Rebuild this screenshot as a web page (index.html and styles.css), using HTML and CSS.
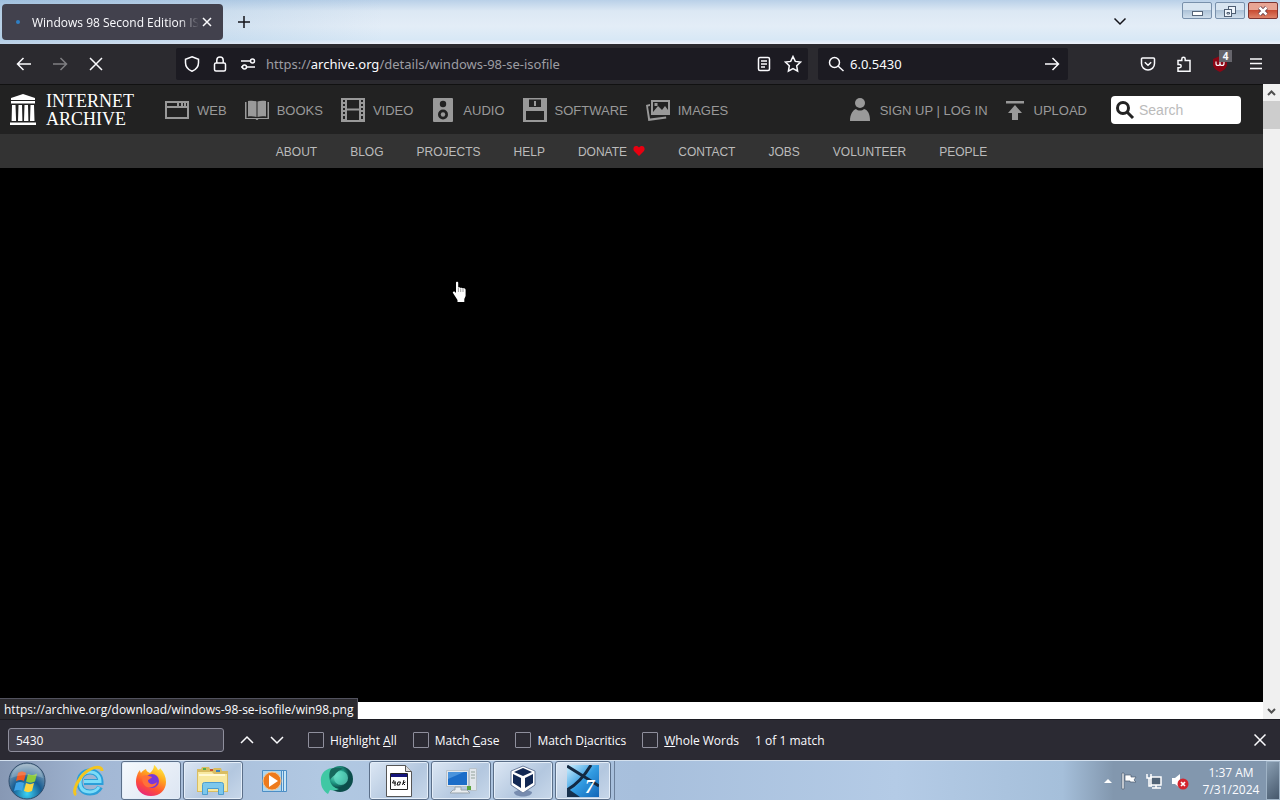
FILE: index.html
```
<!DOCTYPE html>
<html lang="en">
<head>
    <meta charset="UTF-8">
    <meta name="viewport" content="width=device-width, initial-scale=1.0">
    <title>Windows 98 Second Edition ISO</title>
    <link rel="stylesheet" href="styles.css">
</head>
<body>
    <!-- Tab strip -->
    <div class="titlebar">
        <div class="tab">
            <span class="tab-spinner"></span>
            <span class="tab-title">Windows 98 Second Edition ISO</span>
            <button class="tab-close" aria-label="Close tab"><svg width="10" height="10" viewBox="0 0 10 10"><path d="M1 1l8 8M9 1L1 9"/></svg></button>
        </div>
        <button class="new-tab" aria-label="New tab"><svg width="14" height="14" viewBox="0 0 14 14"><path d="M7 1v12M1 7h12"/></svg></button>
        <button class="list-tabs" aria-label="List all tabs"><svg width="14" height="14" viewBox="0 0 14 14"><path d="M1.500 4.500L7 10l5.500-5.500"/></svg></button>
        <div class="window-controls">
            <button aria-label="Minimize"><svg width="28" height="16" viewBox="0 0 28 16"><rect x="9.500" y="8.500" width="10" height="4" fill="#fff" stroke="#566579"/></svg></button>
            <button aria-label="Restore"><svg width="28" height="16" viewBox="0 0 28 16"><g fill="#eef5fc" stroke="#4e5e73"><rect x="12.500" y="3.500" width="7" height="7"/><rect x="8.500" y="6.500" width="7" height="7"/><path d="M11 9.500h2.500v1.500H11z"/></g></svg></button>
            <button class="close" aria-label="Close"><svg width="28" height="16" viewBox="0 0 28 16"><path d="M10.500 4.500l7 7M17.500 4.500l-7 7" stroke="#5b3540" stroke-width="4"/><path d="M10.500 4.500l7 7M17.500 4.500l-7 7" stroke="#fff" stroke-width="2.500"/></svg></button>
        </div>
    </div>

    <!-- Navigation toolbar -->
    <div class="toolbar">
        <button class="tool" aria-label="Back"><svg width="16" height="16" viewBox="0 0 16 16"><path d="M15 8H1.500M7.500 2l-6 6 6 6"/></svg></button>
        <button class="tool disabled" aria-label="Forward"><svg width="16" height="16" viewBox="0 0 16 16"><path d="M1 8h13.500M8.500 2l6 6-6 6"/></svg></button>
        <button class="tool" aria-label="Stop"><svg width="16" height="16" viewBox="0 0 16 16"><path d="M2 2l12 12M14 2L2 14"/></svg></button>
        <div class="urlbar">
            <svg width="16" height="16" viewBox="0 0 16 16"><path d="M8 .8l6.500 2.400v3.600c0 4-2.600 6.900-6.500 8.500-3.900-1.600-6.500-4.500-6.500-8.500V3.200z"/></svg>
            <svg width="16" height="16" viewBox="0 0 16 16"><rect x="2.500" y="7" width="11" height="8" rx="1.500"/><path d="M4.800 7V4.200a3.200 3.200 0 0 1 6.400 0V7"/></svg>
            <svg width="16" height="16" viewBox="0 0 16 16"><path d="M1 5h9M7 11h8M1 11h1"/><circle cx="12.500" cy="5" r="2"/><circle cx="4.500" cy="11" r="2"/></svg>
            <div class="url">https://<b>archive.org</b>/details/windows-98-se-isofile</div>
            <svg width="16" height="16" viewBox="0 0 16 16"><rect x="2.500" y="1.500" width="11" height="13" rx="1.500"/><path d="M5 5h6M5 8h6M5 11h4"/></svg>
            <svg width="18" height="18" viewBox="0 0 18 18"><path d="M9 1.500l2.300 4.900 5.200.7-3.800 3.700.9 5.300L9 13.500l-4.600 2.600.9-5.300L1.500 7.100l5.200-.7z"/></svg>
        </div>
        <div class="searchbar">
            <svg width="16" height="16" viewBox="0 0 16 16"><circle cx="6.500" cy="6.500" r="5"/><path d="M10 10l5.500 5"/></svg>
            <input type="text" value="6.0.5430" aria-label="Search the web">
            <button aria-label="Go"><svg width="16" height="16" viewBox="0 0 16 16"><path d="M1 8h13.500M8.500 2l6 6-6 6"/></svg></button>
        </div>
        <button class="tool" aria-label="Save to Pocket"><svg width="16" height="16" viewBox="0 0 16 16"><path d="M2.500 2h11a1 1 0 0 1 1 1v4.500a6.500 6.500 0 0 1-13 0V3a1 1 0 0 1 1-1zM4.800 6.200L8 9.300l3.200-3.100"/></svg></button>
        <button class="tool" aria-label="Extensions"><svg width="16" height="16" viewBox="0 0 16 16"><path d="M2 4.500h3.800V3a1.700 1.700 0 0 1 3.400 0v1.500H14v10.700H2v-3.400h1.500a1.700 1.700 0 0 0 0-3.400H2z"/></svg></button>
        <button class="tool blocker" aria-label="Content blocker"><svg width="16" height="16" viewBox="0 0 16 16"><path d="M8 0l7 3v5c0 4-3 6-7 8-4-2-7-4-7-8V3z" fill="#8c0514" stroke="none"/><path d="M4 5.500v2a2 2 0 0 0 4 0v-2M8 7.500a2 2 0 0 0 4 0v-2H9.500" stroke-width="1.200"/></svg><span class="count">4</span></button>
        <button class="tool" aria-label="Menu"><svg width="16" height="16" viewBox="0 0 16 16"><path d="M2 3h12M2 7.500h12M2 12.500h12"/></svg></button>
    </div>

    <div class="viewport">
        <div class="page">
            <header class="topnav">
                <a class="brand" href="#">
                    <svg width="28" height="32" viewBox="0 0 28 32" fill="#fff"><path d="M14 0l12 4v2H2V4zM2 7h24v2.500H2zM3 11h3.500l.6 16H2.600zM9.500 11H13l.4 16H9zM15.500 11H19l.4 16H15zM21.500 11H25l.5 16H21zM1 28.500h26V31H1z"/></svg>
                    <span>INTERNET<br>ARCHIVE</span>
                </a>
                <nav class="media">
                    <a href="#"><svg width="24" height="26" viewBox="0 0 24 26"><path fill-rule="evenodd" d="M0 4h24v18H0zM2 6v3h10V6zM14 6v3h2V6zM18 6v3h1V6zM21 6v3h1V6zM2 11v9h20v-9z"/></svg>WEB</a>
                    <a href="#"><svg width="24" height="26" viewBox="0 0 24 26"><path d="M3 4c3-.5 6-.5 8.500.5V20c-3-1-6-1-8.500-.5zM12.500 4.500C15 3.500 18 3.500 21 4v15.500c-2.500-.5-5.500-.5-8.500.5zM0 5h1.500v16h21V5H24v17H13.500l-1 1h-1l-1-1H0z"/></svg>BOOKS</a>
                    <a href="#"><svg width="24" height="26" viewBox="0 0 24 26"><path fill-rule="evenodd" d="M0 1h24v24H0zM6 3v8.500h12V3zM6 13.500V23h12v-9.500zM2 3v2h2V3zM2 7v2h2V7zM2 11v2h2v-2zM2 15v2h2v-2zM2 19v3h2v-3zM20 3v2h2V3zM20 7v2h2V7zM20 11v2h2v-2zM20 15v2h2v-2zM20 19v3h2v-3z"/></svg>VIDEO</a>
                    <a href="#"><svg width="24" height="26" viewBox="0 0 24 26"><rect x="2" y="1" width="20" height="24" rx="1"/><circle cx="12" cy="7" r="3.200" fill="#222"/><circle cx="12" cy="17.500" r="5" fill="#222"/><circle cx="12" cy="17.500" r="2.200"/></svg>AUDIO</a>
                    <a href="#"><svg width="24" height="26" viewBox="0 0 24 26"><path fill-rule="evenodd" d="M0 1h24v24H0zM6 2.500V10h12V2.500zM3 14v9h18v-9z"/><path d="M11 4h2v5h-2z"/></svg>SOFTWARE</a>
                    <a href="#"><svg width="24" height="26" viewBox="0 0 24 26"><path fill-rule="evenodd" d="M5 3h19v15H5zM7 5v11h15V5z"/><path d="M7 15l5-6 4 4 3-4 3 4v3H7zM8.500 6h3v3h-3zM0 8l4-1v2l-2 .5 2 12 16-2 .3 2L2.300 24z"/></svg>IMAGES</a>
                </nav>
                <nav class="account">
                    <a href="#"><svg width="24" height="26" viewBox="0 0 24 26"><circle cx="12" cy="6" r="5"/><path d="M2 24c0-7 3-11 6-12 2 2 6 2 8 0 4 1 6 5 6 12z"/></svg>SIGN UP | LOG IN</a>
                    <a href="#"><svg width="24" height="26" viewBox="0 0 24 26"><path d="M4 4h18v2.500H4zM13 8l7 8h-4v7h-6v-7H6z"/></svg>UPLOAD</a>
                </nav>
                <label class="ia-search">
                    <svg width="20" height="20" viewBox="0 0 20 20"><circle cx="8" cy="8" r="5.500"/><path d="M12 12l6 6"/></svg>
                    <input type="text" placeholder="Search" aria-label="Search the archive">
                </label>
            </header>
            <nav class="subnav">
                <a href="#">ABOUT</a>
                <a href="#">BLOG</a>
                <a href="#">PROJECTS</a>
                <a href="#">HELP</a>
                <a href="#">DONATE <svg width="12" height="10" viewBox="0 0 12 10"><path fill="#e80010" d="M6 10L1 5C-.5 2.500 1 0 3 0c1.500 0 2.500.6 3 1.500C6.500.6 7.500 0 9 0c2 0 3.500 2.500 2 5z"/></svg></a>
                <a href="#">CONTACT</a>
                <a href="#">JOBS</a>
                <a href="#">VOLUNTEER</a>
                <a href="#">PEOPLE</a>
            </nav>
            <div class="theatre"></div>
            <div class="page-body"></div>
        </div>
        <div class="scrollbar">
            <button aria-label="Scroll up"><svg width="9" height="6" viewBox="0 0 9 6"><path d="M1 5l3.500-3.500L8 5"/></svg></button>
            <span class="thumb"></span>
            <button aria-label="Scroll down"><svg width="9" height="6" viewBox="0 0 9 6"><path d="M1 1l3.500 3.500L8 1"/></svg></button>
        </div>
        <div class="link-status">https://archive.org/download/windows-98-se-isofile/win98.png</div>
        <svg class="pointer" width="16" height="22" viewBox="0 0 16 22"><path fill="#fff" d="M4 1.500C4 .5 6.200.5 6.200 1.500V6.500c.5-.6 2-.5 2.300.5 .5-.6 2-.4 2.300.5 1-.4 2.500.2 2.800 1.200V15l-1.300 3v3H5.500v-2L1 12c-.7-1.200.8-2.200 1.800-1.200L4 12z"/><path stroke="#777" stroke-width=".7" d="M6.400 7v4M8.700 7.500V11M11 8v3"/></svg>
    </div>

    <!-- Find in page -->
    <div class="findbar">
        <input class="find-input" type="text" value="5430" aria-label="Find in page">
        <button class="find-step" aria-label="Previous"><svg width="14" height="14" viewBox="0 0 14 14"><path d="M1 10l6-6 6 6"/></svg></button>
        <button class="find-step" aria-label="Next"><svg width="14" height="14" viewBox="0 0 14 14"><path d="M1 4l6 6 6-6"/></svg></button>
        <div class="find-options">
            <label><input type="checkbox"><span>Highlight <u>A</u>ll</span></label>
            <label><input type="checkbox"><span>Match <u>C</u>ase</span></label>
            <label><input type="checkbox"><span>Match D<u>i</u>acritics</span></label>
            <label><input type="checkbox"><span><u>W</u>hole Words</span></label>
            <span>1 of 1 match</span>
        </div>
        <button class="find-close" aria-label="Close find bar"><svg width="12" height="12" viewBox="0 0 12 12"><path d="M.5.500l11 11M11.500.500l-11 11"/></svg></button>
    </div>

    <!-- Windows taskbar -->
    <div class="taskbar">
        <button class="start" aria-label="Start">
            <svg width="38" height="38" viewBox="0 0 38 38">
                <defs><radialGradient id="orb" cx=".5" cy=".85" r=".8"><stop offset="0" stop-color="#3bd3f5"/><stop offset=".5" stop-color="#175c92"/><stop offset="1" stop-color="#8fa9bd"/></radialGradient></defs>
                <circle cx="19" cy="19" r="18" fill="url(#orb)" stroke="#304c6b"/>
                <path fill="#ee5a24" d="M10 11c3-2 5-2 8 0l-2 8c-3-1.500-5-1.500-8 0z"/>
                <path fill="#8ecb3c" d="M20 12c3 1.500 5 1.500 9-.5l-2 8c-3 1.500-6 1.500-9 0z"/>
                <path fill="#3fa3e8" d="M8 21c3-1.500 5-1.500 8 0l-2 8c-2-1.500-5-1.500-8 0z"/>
                <path fill="#fcd53f" d="M18 21c3 1.500 5 1.500 8 0l-2 8c-3 1.500-5 1.500-8 0z"/>
                <path fill="#fff" opacity=".2" d="M3 16C5 5 13 2 19 2s14 3 16 14c-10-4-22-4-32 0z"/>
            </svg>
        </button>
        <div class="apps">
            <button class="app" aria-label="Internet Explorer">
                <svg width="34" height="32" viewBox="0 0 34 32"><path fill="none" stroke="#2b9fd9" stroke-width="6" d="M28 22c-2 4-6 5.500-10 5.500C11 27.500 7.500 23 7.500 17S12 6.500 18 6.500 28.500 11 28.500 17H12"/><path fill="none" stroke="#7bdcf8" stroke-width="3" d="M27 22c-2 3-5 5-9 5C11 27 8 23 8 17S12 7 18 7s10 4 10 9.500H12"/><path fill="none" stroke="#f4c51e" stroke-width="3" d="M30 6C30-1 17 2 9 12 3 20 1 28 4 30"/></svg>
            </button>
            <button class="app running active" aria-label="Firefox">
                <svg width="32" height="32" viewBox="0 0 32 32">
                    <defs><linearGradient id="fox" x1=".8" y1="0" x2=".3" y2="1"><stop offset="0" stop-color="#fff04a"/><stop offset=".35" stop-color="#ffab1e"/><stop offset=".7" stop-color="#ff5035"/><stop offset="1" stop-color="#e7277c"/></linearGradient></defs>
                    <path fill="url(#fox)" d="M19 0c3 2 4 5 4 5 2-1 2-1 2-2 4 4 6 9 6 14 0 8-6 14-15 14S1 25 1 17C1 12 3 7 5 5c0 2 1 3 1 3 1-2 3-3 5-4 0 2 2 3 4 4 2-2 4-4 4-8z"/>
                    <circle cx="17" cy="16" r="7" fill="#7a37d8"/>
                    <path fill="#ff7139" d="M8 11c3-2 6 0 9 1-1 2-4 2-4 4 1 4 6 4 9 1-1 6-11 8-14 1-1-3-1-5 0-7z"/>
                </svg>
            </button>
            <button class="app running" aria-label="Explorer">
                <svg width="34" height="32" viewBox="0 0 34 32"><path fill="#d9bd62" d="M1 4h4l1-2h7l1 2h3l1-1h7l1 3h6v21H1z"/><path fill="#f8e9a0" d="M2 7h14l2 2h13v17H2z"/><path fill="#fff9d4" d="M3 9h26v2H3z"/><path fill="#55ae49" d="M7 3h3v2H7z"/><path fill="#c8542f" d="M14 4h3v2h-3z"/><path fill="#3c83bd" d="M20 5h4v2h-4z"/><path fill="#7cc8ec" stroke="#4d9dce" d="M6.500 29.500v-10q0-2 2-2h17q2 0 2 2v10h-5v-6h-11v6z"/></svg>
            </button>
            <button class="app" aria-label="Media Player">
                <svg width="30" height="28" viewBox="0 0 30 28"><path fill="#c9e5f5" stroke="#4c8ec5" d="M9.500 3.500h17v21h-17zM6.500 3.500h17v21h-17z"/><path fill="#acd5ee" stroke="#4c8ec5" d="M2.500 3.500h19v21h-19z"/><circle cx="12" cy="14" r="9" fill="#ed7a1c" stroke="#f6c38c"/><path fill="#fff" d="M9 8l9 6-9 6z"/></svg>
            </button>
            <button class="app" aria-label="Globe">
                <svg width="34" height="32" viewBox="0 0 34 32"><defs><radialGradient id="globe" cx=".35" cy=".35"><stop offset="0" stop-color="#7ce4cc"/><stop offset=".6" stop-color="#219c86"/><stop offset="1" stop-color="#0c4d4b"/></radialGradient></defs><circle cx="20" cy="14" r="13" fill="url(#globe)"/><path fill="#40c8a4" d="M12 3C4 4 0 10 1 17c0 6 4 10 7 12l2-4c4 1 7 0 9-1-5-1-8-4-9-8-1-5-1-9 2-13z"/><path fill="#17685d" d="M11 4c4-2 9-2 12 0-4 1-6 3-8 6-2 1-4 3-5 5-1-4-1-8 1-11z"/><circle cx="21" cy="13" r="7" fill="#62dcc4" opacity=".7"/></svg>
            </button>
            <button class="app running" aria-label="Batch script">
                <svg width="28" height="32" viewBox="0 0 28 32"><path fill="#fff" stroke="#555" d="M1.500.500h19l6 6v25h-25z"/><path fill="#ddd" stroke="#555" d="M20.500.500v6h6"/><path fill="#fff" stroke="#222" d="M5.500 8.500h17v16h-17z"/><path fill="#15157c" d="M6 9h16v3H6z"/><path fill="none" stroke="#111" d="M9 15l-1.500 3H11m-1-2v5m3-4h2.500l-1 3H12zm6-2l-1.500 5m.5-2l2.500-1m-2.500 1l2 2"/></svg>
            </button>
            <button class="app running" aria-label="Computer">
                <svg width="32" height="30" viewBox="0 0 32 30"><path fill="#e2e7ec" stroke="#b8c2cb" d="M24.500 2.500h7v22h-7zM1.500 4.500h22v16h-22z"/><path fill="#1c6dc8" d="M3 6h19v13H3z"/><path fill="#4a93dc" d="M3 6h16L3 13z"/><path stroke="#93a29a" d="M26 6h4M26 9h4M26 12h4"/><path fill="#e9edf0" stroke="#9aa5ad" d="M10 21h6v3h6l3 3H5l3-3h2z"/><path fill="#5ca63c" d="M22 20h4v4h-4z"/></svg>
            </button>
            <button class="app running" aria-label="VirtualBox">
                <svg width="30" height="32" viewBox="0 0 30 32"><path fill="#778caf" d="M6 27l9-4 9 4c0 6-18 6-18 0z"/><path fill="#fff" stroke="#6b7e9e" d="M15 1l12 5v14l-12 8-12-8V6z"/><path fill="#122853" d="M15 3l9 4-9 4-9-4zM5 9l8 4v10l-8-5zM25 9l-8 4v10l8-5z"/></svg>
            </button>
            <button class="app running grouped" aria-label="Windows 7">
                <svg width="32" height="32" viewBox="0 0 32 32"><defs><linearGradient id="seven" x1="0" y1="0" x2="1" y2="1"><stop offset="0" stop-color="#d1f1ff"/><stop offset=".5" stop-color="#329ce2"/><stop offset="1" stop-color="#1165b7"/></linearGradient></defs><path fill="url(#seven)" d="M0 0h32v32H0z"/><path fill="none" stroke="#132942" stroke-width="3" d="M0 1l32 20M24 0C18 10 11 19 0 25"/><path fill="#17314e" d="M0 23l13 9H0z"/><text x="18" y="28" class="seven">7</text></svg>
            </button>
            <span class="group-edge"></span>
        </div>
        <div class="tray">
            <svg width="10" height="6" viewBox="0 0 10 6"><path fill="#fff" d="M5 1l4 4H1z"/></svg>
            <svg width="16" height="18" viewBox="0 0 16 18"><path fill="#fff" stroke="#4d5d70" stroke-width=".7" d="M1 1h2v16H1zM4 3h6v2h5l-2 3 2 2h-6V9H4z"/></svg>
            <svg width="18" height="18" viewBox="0 0 18 18"><path fill="#516376" stroke="#fff" stroke-width="1.500" d="M6 5h10v8H6z"/><path fill="none" stroke="#fff" stroke-width="1.500" d="M7 16h9M11 13v3M2 2v4h4V2M4 6v8h3"/></svg>
            <svg width="18" height="18" viewBox="0 0 18 18"><path fill="#fff" d="M1 6h3l5-4v14l-5-4H1z"/><circle cx="12" cy="12" r="5.500" fill="#d4242d"/><path stroke="#fff" stroke-width="1.700" d="M10 10l4 4M14 10l-4 4"/></svg>
            <div class="clock">1:37 AM<br>7/31/2024</div>
            <button class="show-desktop" aria-label="Show desktop"></button>
        </div>
    </div>
</body>
</html>
```
FILE: styles.css
```
* {
    box-sizing: border-box;
}

body {
    margin: 0;
    height: 100vh;
    display: flex;
    flex-direction: column;
    overflow: hidden;
    font-family: "Open Sans", "Noto Sans", sans-serif;
    font-size: 12px;
    color: #fbfbfe;
    background: #2b2a33;
}

button {
    display: flex;
    align-items: center;
    justify-content: center;
    padding: 0;
    border: none;
    background: none;
    color: inherit;
    font: inherit;
}

input {
    font: inherit;
    color: inherit;
}

a {
    color: inherit;
    text-decoration: none;
}

svg {
    flex: none;
}

/* Tab strip */
.titlebar {
    height: 44px;
    flex: none;
    display: flex;
    align-items: flex-start;
    padding: 0 2px 0 2px;
    background: linear-gradient(90deg, rgba(120, 165, 205, 0.4), rgba(255, 255, 255, 0) 30%), linear-gradient(#b9d0e8, #dce8f4 25%, #e3edf7 60%, #d8e8f6 90%, #eef1fa);
}

.titlebar svg,
.toolbar svg,
.findbar svg,
.scrollbar svg {
    fill: none;
    stroke: currentColor;
    stroke-width: 1.5;
}

.tab {
    width: 221px;
    height: 36px;
    margin-top: 4px;
    padding: 0 8px 0 10px;
    display: flex;
    align-items: center;
    border-radius: 4px;
    background: #42414d;
}

.tab-spinner {
    width: 4px;
    height: 4px;
    margin: 0 12px 0 4px;
    border-radius: 50%;
    background: #2f7fc4;
}

.tab-title {
    flex: 1;
    min-width: 0;
    overflow: hidden;
    white-space: nowrap;
    -webkit-mask-image: linear-gradient(90deg, #000 88%, transparent);
    mask-image: linear-gradient(90deg, #000 88%, transparent);
}

.tab-close {
    width: 16px;
    height: 20px;
}

.new-tab {
    width: 42px;
    height: 44px;
    color: #15141a;
}

.list-tabs {
    width: 28px;
    height: 42px;
    margin-left: auto;
    margin-right: 48px;
    color: #15141a;
}

.window-controls {
    display: flex;
    gap: 3px;
    padding-top: 2px;
}

.window-controls button {
    width: 30px;
    height: 17px;
    border: 1px solid #7890ab;
    border-radius: 2px;
    background: linear-gradient(#d8e5f1 45%, #aec3d8 50%, #cfdeec);
}

.window-controls svg {
    stroke-width: 1;
}

.window-controls .close {
    border-color: #7d3431;
    background: linear-gradient(#e8a594 45%, #c84c33 50%, #df8268);
}

/* Navigation toolbar */
.toolbar {
    height: 40px;
    flex: none;
    display: flex;
    align-items: center;
    padding: 0 6px;
    background: #2b2a2f;
}

.tool {
    width: 36px;
    height: 32px;
}

.disabled {
    opacity: 0.4;
}

.urlbar,
.searchbar {
    height: 32px;
    display: flex;
    align-items: center;
    background: #1c1b22;
    border-radius: 2px;
}

.urlbar {
    flex: 1;
    min-width: 0;
    gap: 12px;
    margin-left: 62px;
    padding: 0 6px 0 8px;
}

.url {
    flex: 1;
    min-width: 0;
    overflow: hidden;
    white-space: nowrap;
    font-family: "Noto Sans", sans-serif;
    font-size: 13px;
    color: #9d9da3;
    margin-left: -2px;
}

.url b {
    font-weight: normal;
    color: #fbfbfe;
}

.searchbar {
    width: 250px;
    margin: 0 62px 0 10px;
    padding: 0 8px 0 10px;
    gap: 6px;
}

.searchbar input {
    flex: 1;
    min-width: 0;
    padding: 0;
    border: none;
    background: none;
    font-family: "Noto Sans", sans-serif;
    font-size: 13px;
}

.blocker {
    position: relative;
}

.count {
    position: absolute;
    top: 2px;
    right: 6px;
    width: 13px;
    height: 12px;
    font-size: 10px;
    line-height: 12px;
    font-weight: bold;
    background: #66656c;
}

/* Web page area */
.viewport {
    position: relative;
    flex: 1;
    min-height: 0;
    display: flex;
    background: #fff;
}

.page {
    flex: 1;
    min-width: 0;
    display: flex;
    flex-direction: column;
    font-family: "Liberation Sans", Arial, sans-serif;
}

.topnav {
    height: 50px;
    flex: none;
    display: flex;
    align-items: center;
    padding: 1px 22px 0 9px;
    border-top: 1px solid #111;
    background: #222;
    color: #999;
    font-size: 13px;
    white-space: nowrap;
}

.topnav svg {
    fill: #999;
}

.brand {
    width: 156px;
    display: flex;
    align-items: center;
    gap: 9px;
    color: #fff;
    font-family: "Liberation Serif", "Times New Roman", serif;
    font-size: 18px;
    line-height: 18px;
}

.topnav .brand svg {
    fill: #fff;
}

.media,
.account {
    display: flex;
    gap: 18px;
}

.media a,
.account a {
    display: flex;
    align-items: center;
    gap: 8px;
}

.account {
    gap: 14px;
    margin-left: auto;
}

.ia-search {
    width: 130px;
    height: 28px;
    margin-left: 24px;
    padding: 0 4px;
    display: flex;
    align-items: center;
    gap: 4px;
    border-radius: 4px;
    background: #fff;
}

.topnav .ia-search svg {
    fill: none;
    stroke: #222;
    stroke-width: 3;
}

.ia-search input {
    width: 90px;
    padding: 0;
    border: none;
    background: none;
    color: #333;
    font-size: 14px;
}

.ia-search input::placeholder {
    color: #bbb;
}

.subnav {
    height: 34px;
    flex: none;
    display: flex;
    align-items: center;
    justify-content: center;
    gap: 33px;
    padding-top: 1px;
    background: #333;
    color: #bbb;
    font-size: 12px;
}

.subnav svg {
    margin-left: 3px;
}

.theatre {
    flex: 1;
    background: #000;
}

.page-body {
    height: 17px;
    flex: none;
    background: #fff;
}

.scrollbar {
    width: 17px;
    display: flex;
    flex-direction: column;
    background: #f0f0f0;
    color: #505050;
}

.scrollbar button {
    height: 17px;
}

.scrollbar button:last-child {
    margin-top: auto;
}

.scrollbar svg {
    stroke-width: 2;
}

.thumb {
    height: 28px;
    background: #cdcdcd;
}

.link-status {
    position: absolute;
    left: 0;
    bottom: 0;
    height: 21px;
    padding: 0 4px;
    border: 1px solid #52525e;
    border-width: 1px 1px 0 0;
    background: #2b2a2f;
    line-height: 21px;
}

.pointer {
    position: absolute;
    left: 452px;
    top: 197px;
}

/* Find in page */
.findbar {
    height: 41px;
    flex: none;
    display: flex;
    align-items: center;
    padding: 0 14px 0 8px;
    border-top: 1px solid #1c1b22;
}

.find-input {
    width: 216px;
    height: 24px;
    margin-right: 8px;
    padding: 0 7px;
    border: 1px solid #8f8f9d;
    border-radius: 3px;
    background: #42414d;
}

.find-step {
    width: 30px;
    height: 24px;
}

.find-options {
    display: flex;
    gap: 16px;
    margin-left: 16px;
    white-space: nowrap;
}

.find-options label {
    display: flex;
    align-items: center;
    gap: 6px;
}

.find-options input {
    appearance: none;
    width: 16px;
    height: 16px;
    margin: 0;
    border: 1px solid #8f8f9d;
    border-radius: 1px;
}

.find-close {
    margin-left: auto;
}

/* Windows taskbar */
.taskbar {
    height: 40px;
    flex: none;
    display: flex;
    border-top: 1px solid #d3e0ee;
    background: linear-gradient(90deg, #8798b4, #a3b8d5 8%, #b1c8e2 25%, #a7bfdc 50%, #b4cbe6 70%, #a5bfda 83%, #8297ae 87%, #8297ae);
}

.start {
    width: 54px;
}

.apps {
    display: flex;
    gap: 2px;
    padding-left: 5px;
}

.app {
    width: 60px;
    height: 39px;
}

.running {
    border: 1px solid #5b6f89;
    border-radius: 3px;
    background: linear-gradient(135deg, #dce7f4, #b3c7df 60%, #c8d8ea);
    box-shadow: inset 0 0 0 1px #e4eef9;
}

.active {
    background: linear-gradient(135deg, #f5f9fd, #dce5f2);
}

.grouped {
    width: 56px;
}

.seven {
    fill: #fff;
    font-family: "Liberation Serif", serif;
    font-size: 19px;
    font-weight: bold;
    font-style: italic;
}

.group-edge {
    width: 2px;
    border-right: 1px solid #6c809b;
}

.tray {
    margin-left: auto;
    display: flex;
    align-items: center;
    gap: 8px;
}

.clock {
    width: 68px;
    text-align: center;
    line-height: 17px;
}

.show-desktop {
    width: 14px;
    height: 39px;
    margin-left: -7px;
    border: 1px solid #9fb3c6;
    background: linear-gradient(135deg, #8a9fb3, #46586c);
}
```
